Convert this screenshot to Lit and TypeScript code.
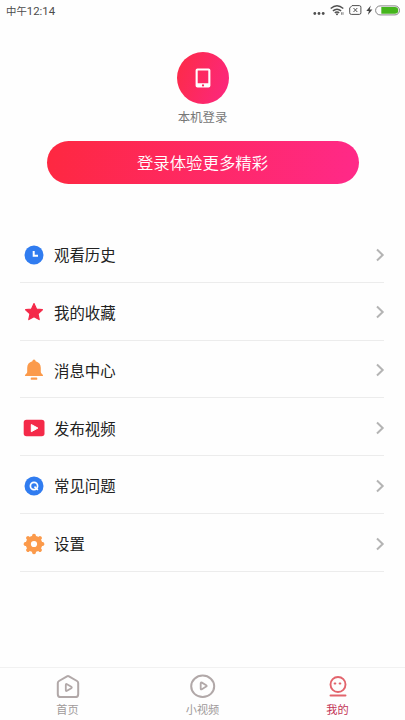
import { LitElement, html, css, svg } from "lit";
import { customElement, property } from "lit/decorators.js";

const icons: Record<string, unknown> = {
  history: svg`<circle cx="12" cy="12" r="9.5" fill="#307cf0"/><path d="M11.7 8v4.8h4.3" fill="none" stroke="#fff" stroke-width="2"/>`,
  star: svg`<path d="M12 3.6l2.5 5.4 5.9.7-4.4 4 1.2 5.9-5.2-2.9-5.2 2.900 1.200-5.900-4.400-4 5.900-.7z" fill="#f42a49" stroke="#f42a49" stroke-width="1.2" stroke-linejoin="round"/>`,
  bell: svg`<path d="M10.4 3.2a1.6 1.6 0 0 1 3.2 0C16.9 4 18.800 6.500 18.800 9.7V14.100c0 1.3 1.9 2.2 2.2 3.1.2.5-.1.8-.6.8H3.600c-.5 0-.8-.3-.6-.8.3-.9 2.200-1.8 2.200-3.1V9.700C5.200 6.500 7.1 4 10.4 3.200z" fill="#fb9a4b"/><rect x="8.7" y="19.6" width="6.600" height="2.200" rx=".9" fill="#fb9a4b"/>`,
  video: svg`<rect x="1.7" y="3.7" width="20.8" height="16.6" rx="2.8" fill="#f42a49"/><path d="M9.300 8.500v7.200l6.600-3.600z" fill="#fff" stroke="#fff" stroke-width="1" stroke-linejoin="round"/>`,
  question: svg`<circle cx="12" cy="12" r="9.5" fill="#307cf0"/><circle cx="12" cy="12" r="3.600" fill="none" stroke="#fff" stroke-width="1.7"/><path d="M12.5 12.6l3.4 3.4" stroke="#fff" stroke-width="1.6"/>`,
  gear: svg`<g fill="#fb9a4b"><circle cx="12" cy="12" r="8.300"/>${[0, 45, 90, 135, 180, 225, 270, 315].map(
    (a) => svg`<rect x="10.1" y="1.7" width="3.8" height="5" rx="1.7" transform="rotate(${a} 12 12)"/>`
  )}</g><circle cx="12" cy="12" r="3.1" fill="#fff"/>`,
};

@customElement("menu-row")
class MenuRow extends LitElement {
  @property() icon = "";
  @property() label = "";
  static styles = css`
    :host { display: flex; align-items: center; height: 57.8px; box-sizing: border-box; padding-top: 2.6px; border-bottom: 1px solid #ececec; }
    .icon { width: 24px; height: 24px; margin-left: 2px; flex: none; }
    .label { flex: 1; margin-left: 8px; padding-top: 3px; font-size: 15.4px; line-height: 24px; color: #222; }
    .chevron { width: 10px; height: 14px; margin-right: -1px; }
  `;
  render() {
    return html`<svg class="icon" viewBox="0 0 24 24">${icons[this.icon]}</svg>
      <span class="label">${this.label}</span>
      <svg class="chevron" viewBox="0 0 10 14"><path d="M2 1.5L7.7 7 2 12.5" fill="none" stroke="#b4b4b4" stroke-width="2"/></svg>`;
  }
}

@customElement("app-root")
class AppRoot extends LitElement {
  static styles = css`
    :host { display: flex; flex-direction: column; height: 720px; overflow: hidden; background: #fefefe;
      font-family: Roboto, "Noto Sans CJK SC", sans-serif; }
    svg { display: block; }
    .status { height: 22px; display: flex; align-items: center; padding: 0 4px 0 6px; color: #4c4c4c; }
    .time { flex: 1; font-size: 10.4px; line-height: 22px; }
    .digits { font-size: 11.4px; }
    .profile { height: 203px; display: flex; flex-direction: column; align-items: center; padding-top: 30px; box-sizing: border-box; }
    .avatar { width: 52px; height: 52px; border-radius: 50%; background: linear-gradient(110deg, #fd2b45, #fc2781);
      display: flex; align-items: center; justify-content: center; }
    .caption { margin-top: 5px; font-size: 12.4px; line-height: 18px; color: #777; }
    .login { margin: 14px 0 0; width: 312px; height: 43px; border: 0; border-radius: 22px; padding: 0;
      background: linear-gradient(100deg, #fe2840, #ff2989); color: #fff; font: 350 16.4px/43px "Noto Sans CJK SC", sans-serif; }
    .menu { flex: 1; padding: 0 21px 0 20px; }
    .tabs { height: 53px; box-sizing: border-box; border-top: 1px solid #f1f1f1; display: grid; grid-template-columns: repeat(3, 1fr); }
    .tab { display: flex; flex-direction: column; align-items: center; padding-top: 6px; font-size: 11.2px; line-height: 16px; color: #a09a9a; }
    .tab span { margin-top: 3px; }
    .active { color: #c33556; }
  `;
  render() {
    const rows = [
      ["history", "观看历史"], ["star", "我的收藏"], ["bell", "消息中心"],
      ["video", "发布视频"], ["question", "常见问题"], ["gear", "设置"],
    ];
    return html`
      <header class="status">
        <span class="time">中午<span class="digits">12:14</span></span>
        <svg width="90" height="22" viewBox="0 0 90 22" fill="none" stroke="#505050">
          <g fill="#505050" stroke="none"><circle cx="3.8" cy="13.5" r="1.4"/><circle cx="8" cy="13.5" r="1.4"/><circle cx="12.2" cy="13.5" r="1.4"/></g>
          <path d="M19.700 8.5Q26 3.100 32.300 8.500M21.900 10.900Q26 7.500 30.100 10.900M23.800 12.900Q26 11.100 28.200 12.900" stroke-width="1.4"/>
          <circle cx="26" cy="14.2" r="1" fill="#505050" stroke="none"/>
          <path d="M30.600 12.200v2.600M32 12.200v2.600" stroke-width=".7"/>
          <path d="M41 5.600h7.300q1.600 0 1.600 1.600v5.600q0 1.600-1.600 1.600h-8q-1.600 0-1.600-1.600V8z" stroke-width="1"/>
          <path d="M42.5 8l3.8 4M46.3 8l-3.8 4" stroke-width="1"/>
          <path d="M59.800 5.500l-4.500 5.600h2.600l-1 4 4.500-5.600h-2.700z" fill="#444" stroke="none"/>
          <rect x="64.600" y="5.900" width="23.900" height="9" rx="4.5" stroke="#777" stroke-width=".9"/>
          <path d="M70.300 7.100h13.600a3.300 3.300 0 0 1 0 6.600H70.300z" fill="#45b51d" stroke="none"/>
        </svg>
      </header>
      <section class="profile">
        <div class="avatar">
          <svg width="16" height="20" viewBox="0 0 16 20"><path fill="#fff" fill-rule="evenodd" d="M2.4.4h11.2a1.8 1.8 0 0 1 1.8 1.8v15.6a1.8 1.8 0 0 1-1.8 1.8H2.4A1.8 1.8 0 0 1 .6 17.8V2.2A1.8 1.8 0 0 1 2.4.4zM2.700 2.5v12.800h10.600V2.500z"/><circle cx="8" cy="17.400" r="1.100" fill="#fc2962"/></svg>
        </div>
        <div class="caption">本机登录</div>
        <button class="login">登录体验更多精彩</button>
      </section>
      <main class="menu">${rows.map(([i, l]) => html`<menu-row icon=${i} label=${l}></menu-row>`)}</main>
      <nav class="tabs">
        <div class="tab">
          <svg width="26" height="26" viewBox="0 0 26 26" fill="none" stroke="#b1a8a8" stroke-width="2" stroke-linejoin="round"><path d="M12 2.400q1-.6 2 0l8 4.600q1.200.7 1.200 2v11.200q0 2.900-2.900 2.900H5.700q-2.900 0-2.900-2.900V9q0-1.300 1.200-2z"/><path d="M10.800 10.900q0-1.400 1.200-.7l4.300 2.600q1 .7 0 1.400l-4.300 2.600q-1.200.7-1.200-.7z" stroke-width="1.800"/></svg>
          <span>首页</span>
        </div>
        <div class="tab">
          <svg width="26" height="26" viewBox="0 0 26 26" fill="none" stroke="#b1a8a8" stroke-width="2" stroke-linejoin="round"><ellipse cx="12.700" cy="12.300" rx="11.500" ry="10.700"/><path d="M10.700 9.300q0-1.400 1.200-.7l4.300 2.600q1 .7 0 1.400l-4.300 2.600q-1.200.7-1.200-.7z" stroke-width="1.800"/></svg>
          <span>小视频</span>
        </div>
        <div class="tab active">
          <svg width="26" height="26" viewBox="0 0 26 26" fill="none" stroke="#e2646c" stroke-width="1.900" stroke-linecap="round"><circle cx="13" cy="10.500" r="7.500"/><path d="M5.500 21.500h15"/><path d="M9.600 9.500h.8M14.600 9.500h.8"/></svg>
          <span>我的</span>
        </div>
      </nav>`;
  }
}
